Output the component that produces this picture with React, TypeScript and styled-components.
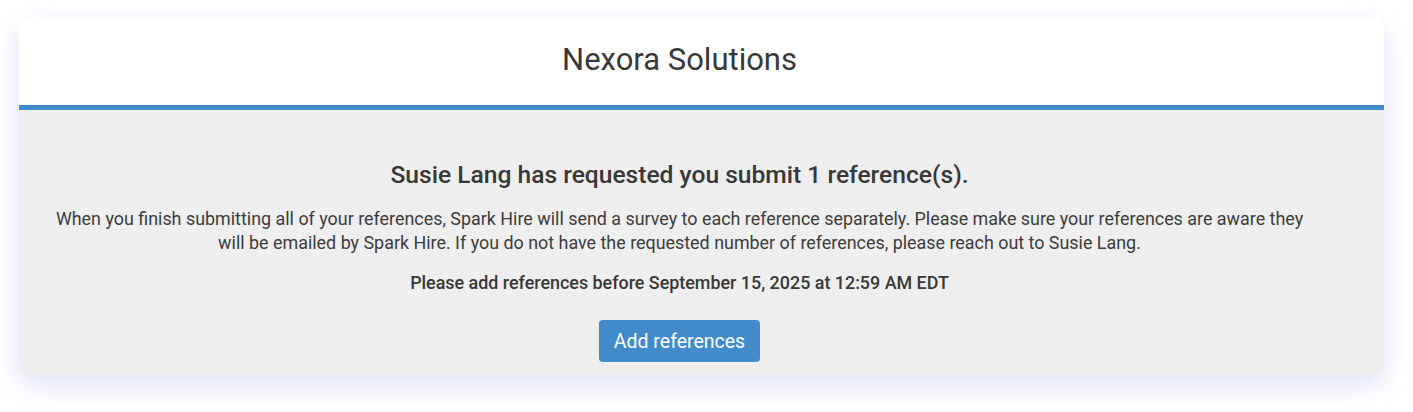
import React from 'react';
import styled, { createGlobalStyle } from 'styled-components';

const GlobalStyle = createGlobalStyle`
  body {
    margin: 0;
    background: #ffffff;
    font-family: Roboto, 'Liberation Sans', Arial, sans-serif;
    color: #333333;
  }
`;

const Page = styled.div`
  padding: 17px 29px 37px 19px;
`;

const Card = styled.section`
  background: #eeeeee;
  border-radius: 12px;
  overflow: hidden;
  box-shadow: 0 10px 28px rgba(110, 120, 235, 0.22);
`;

const Header = styled.header`
  height: 88px;
  display: flex;
  align-items: center;
  justify-content: center;
  padding-right: 44px;
  background: #ffffff;
  border-bottom: 5px solid #428bca;
`;

const CompanyName = styled.h1`
  margin: 0 0 2px;
  font-size: 31px;
  line-height: 36px;
  font-weight: 400;
  color: #383838;
`;

const Body = styled.div`
  display: flex;
  flex-direction: column;
  align-items: center;
  text-align: center;
  padding: 52px 72px 13px 28px;
`;

const Heading = styled.h2`
  margin: 0 0 19px;
  font-size: 24.6px;
  line-height: 26px;
  font-weight: 500;
  color: #383838;
`;

const Intro = styled.p`
  margin: 0 0 16px;
  font-size: 17.9px;
  line-height: 24px;
  color: #3c3c3c;
`;

const Deadline = styled.p`
  margin: 0 0 25px;
  font-size: 17.9px;
  line-height: 24px;
  font-weight: 500;
  color: #383838;
`;

const PrimaryButton = styled.button`
  height: 42px;
  padding: 0 15px;
  border: none;
  border-radius: 4px;
  background: #428bca;
  color: #ffffff;
  font-family: inherit;
  font-size: 19.5px;
  cursor: pointer;
`;

export default function App() {
  return (
    <Page>
      <GlobalStyle />
      <Card>
        <Header>
          <CompanyName>Nexora Solutions</CompanyName>
        </Header>
        <Body>
          <Heading>Susie Lang has requested you submit 1 reference(s).</Heading>
          <Intro>
            When you finish submitting all of your references, Spark Hire will send a survey to each reference
            separately. Please make sure your references are aware they will be emailed by Spark Hire. If you do not
            have the requested number of references, please reach out to Susie Lang.
          </Intro>
          <Deadline>Please add references before September 15, 2025 at 12:59 AM EDT</Deadline>
          <PrimaryButton>Add references</PrimaryButton>
        </Body>
      </Card>
    </Page>
  );
}
